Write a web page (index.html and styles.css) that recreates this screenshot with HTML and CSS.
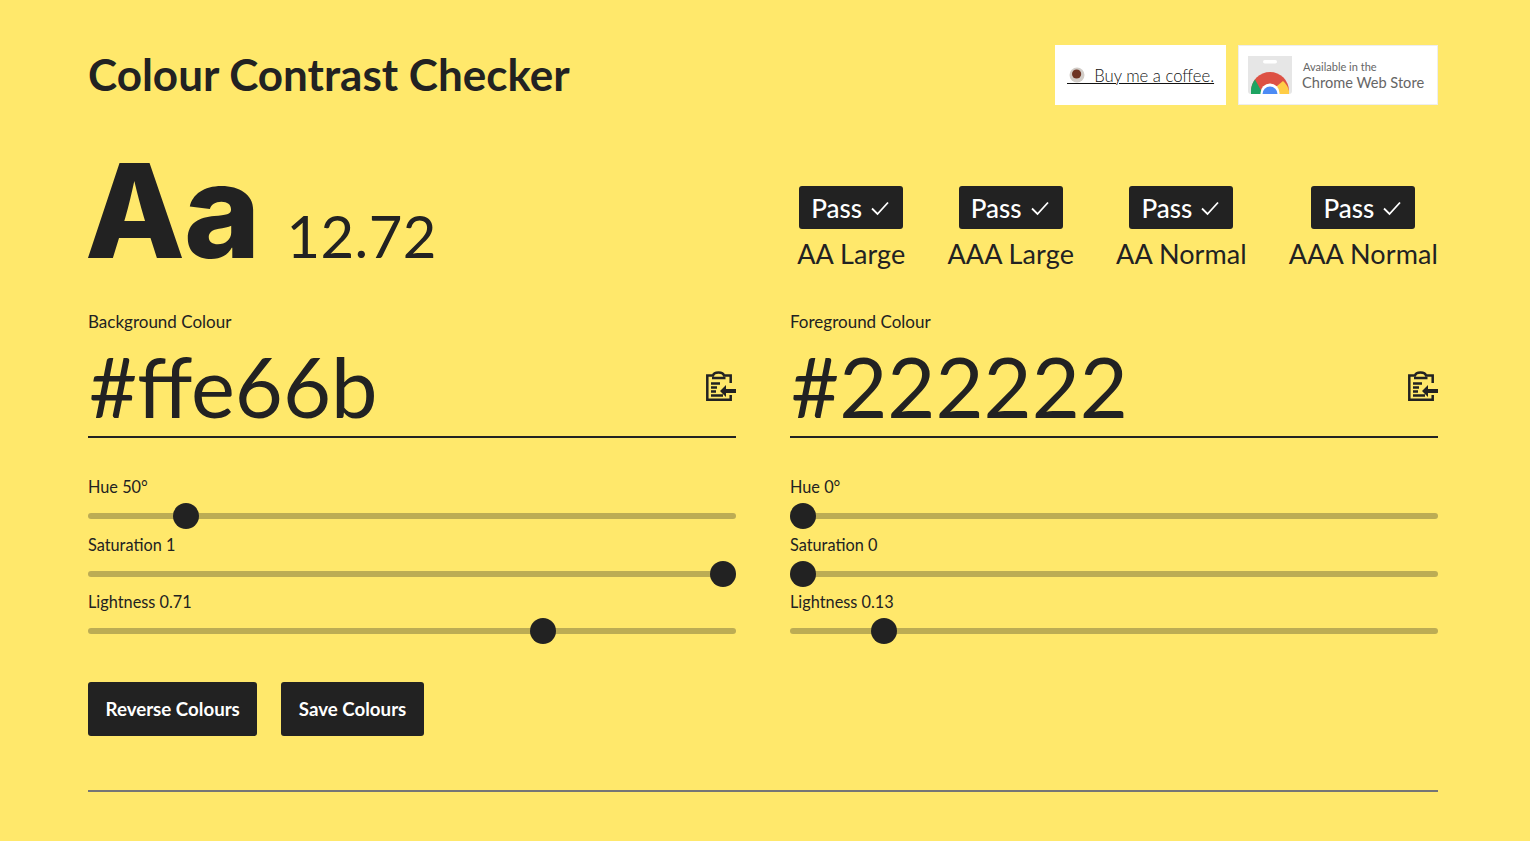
FILE: index.html
```html
<!DOCTYPE html>
<html lang="en">
<head>
<meta charset="utf-8">
<title>Colour Contrast Checker</title>
<link rel="stylesheet" href="styles.css">
</head>
<body>
<main class="page">
  <header class="top">
    <h1 class="title">Colour Contrast Checker</h1>
    <div class="promos">
      <a class="promo coffee" href="#"><svg class="cup" viewBox="0 0 16 16" width="16" height="16"><circle cx="8" cy="8" r="7.500" fill="#d2cdc8"/><circle cx="7.600" cy="7" r="4.600" fill="#6e3524"/></svg><span class="coffee-text">&nbsp;&nbsp;&nbsp;&nbsp;&nbsp;&nbsp;Buy me a coffee.</span></a>
      <a class="promo store" href="#">
        <svg class="store-icon" viewBox="0 0 44 38" width="44" height="38">
          <path d="M0 0H44V35a3 3 0 0 1-3 3H3a3 3 0 0 1-3-3Z" fill="#e6e6e6"/>
          <rect x="15" y="4" width="14" height="3.500" rx="1.700" fill="#fff"/>
          <path d="M3 38V35a19 19 0 0 1 38 0V38Z" fill="#dd5144"/>
          <path d="M3 38V35a19 19 0 0 1 4-11.500L15 38Z" fill="#1da462"/>
          <path d="M29 30L35 25a19 19 0 0 1 6 10V38H29Z" fill="#ffcd46"/>
          <circle cx="22" cy="37" r="9.500" fill="#fff"/>
          <path d="M14.500 38a7.500 7.500 0 0 1 15 0Z" fill="#4c8bf5"/>
        </svg>
        <span class="store-text"><span class="store-small">Available in the</span><span class="store-big">Chrome Web Store</span></span>
      </a>
    </div>
  </header>

  <section class="result">
    <div class="score"><span class="aa">Aa</span><span class="ratio">12.72</span></div>
    <ul class="checks">
      <li class="check"><span class="badge">Pass <svg class="tick" viewBox="0 0 20 20" width="20" height="20"><path d="M2 10.500L7.500 16 18 4.500"/></svg></span><span class="level">AA Large</span></li>
      <li class="check"><span class="badge">Pass <svg class="tick" viewBox="0 0 20 20" width="20" height="20"><path d="M2 10.500L7.500 16 18 4.500"/></svg></span><span class="level">AAA Large</span></li>
      <li class="check"><span class="badge">Pass <svg class="tick" viewBox="0 0 20 20" width="20" height="20"><path d="M2 10.500L7.500 16 18 4.500"/></svg></span><span class="level">AA Normal</span></li>
      <li class="check"><span class="badge">Pass <svg class="tick" viewBox="0 0 20 20" width="20" height="20"><path d="M2 10.500L7.500 16 18 4.500"/></svg></span><span class="level">AAA Normal</span></li>
    </ul>
  </section>

  <section class="columns">
    <div class="column">
      <div class="field-label">Background Colour</div>
      <div class="hex-row">
        <div class="hex">#ffe66b</div>
        <svg class="paste" viewBox="0 0 30 30" width="30" height="30"><path class="paste-line" d="M24.700 12V4.500H18C17 .5 8 .5 7 4.500H1.300V28.700H24.700V24"/><path class="paste-line" d="M6 7H19.500M5 12.500H14M5 16.500H11M5 20.500H10M5 24.500H17"/><path class="paste-fill" d="M14 20l6-6V18H30v4H20v4Z"/></svg>
      </div>
      <div class="control"><label class="label">Hue 50°</label><input class="slider" type="range" min="0" max="360" step="0.1" value="49.300"></div>
      <div class="control"><label class="label">Saturation 1</label><input class="slider" type="range" min="0" max="1" step="0.01" value="1"></div>
      <div class="control"><label class="label">Lightness 0.71</label><input class="slider" type="range" min="0" max="1" step="0.01" value="0.71"></div>
    </div>
    <div class="column">
      <div class="field-label">Foreground Colour</div>
      <div class="hex-row">
        <div class="hex">#222222</div>
        <svg class="paste" viewBox="0 0 30 30" width="30" height="30"><path class="paste-line" d="M24.700 12V4.500H18C17 .5 8 .5 7 4.500H1.300V28.700H24.700V24"/><path class="paste-line" d="M6 7H19.500M5 12.500H14M5 16.500H11M5 20.500H10M5 24.500H17"/><path class="paste-fill" d="M14 20l6-6V18H30v4H20v4Z"/></svg>
      </div>
      <div class="control"><label class="label">Hue 0°</label><input class="slider" type="range" min="0" max="360" step="0.1" value="0"></div>
      <div class="control"><label class="label">Saturation 0</label><input class="slider" type="range" min="0" max="1" step="0.01" value="0"></div>
      <div class="control"><label class="label">Lightness 0.13</label><input class="slider" type="range" min="0" max="1" step="0.01" value="0.13"></div>
    </div>
  </section>

  <div class="actions">
    <button class="btn" type="button">Reverse Colours</button>
    <button class="btn" type="button">Save Colours</button>
  </div>
  <hr class="rule">
</main>
</body>
</html>
```
FILE: styles.css
```css
* { box-sizing: border-box; }
html, body { margin: 0; height: 100%; }
body {
  background: #ffe86b;
  color: #222;
  font-family: "Lato", "Open Sans", sans-serif;
  overflow: hidden;
}
.page { padding: 45px 92px 0 88px; }
.top { display: flex; justify-content: space-between; align-items: center; height: 60px; }
.title { margin: -2px 0 0; font-size: 44px; font-weight: 700; line-height: 60px; }
.promos { display: flex; gap: 12px; }
.promo { background: #fff; height: 60px; display: flex; align-items: center; color: #222; text-decoration: none; }
.coffee { position: relative; width: 171px; padding-left: 12px; font-size: 16.700px; font-weight: 300; }
.coffee-text { text-decoration: underline; text-decoration-thickness: 1px; white-space: pre; margin-top: 1px; color: #111; }
.cup { position: absolute; left: 14px; top: 22px; }
.store { width: 200px; padding-left: 9px; border: 1px solid #eee; gap: 10px; }
.store-text { display: flex; flex-direction: column; color: #666; margin-top: 1px; }
.store-small { font-size: 11px; line-height: 14px; padding-left: 1px; }
.store-big { font-size: 14.600px; line-height: 18px; }
.result { display: flex; justify-content: space-between; align-items: flex-start; margin-top: 36px; height: 171px; }
.score { display: flex; align-items: baseline; }
.aa { font-family: "Inter", sans-serif; font-size: 130px; font-weight: 800; line-height: 139px; margin-left: -3px; letter-spacing: -1px; }
.ratio { font-size: 58px; font-weight: 400; margin-left: 27px; letter-spacing: 0.4px; }
.checks { list-style: none; margin: 0; padding: 45px 0 0; display: flex; gap: 42px; }
.check { display: flex; flex-direction: column; align-items: center; }
.badge { display: flex; align-items: center; gap: 8px; width: 104px; height: 43px; padding-left: 12px; border-radius: 3px; background: #222; color: #fff; font-size: 26px; font-weight: 500; }
.tick { fill: none; stroke: #fff; stroke-width: 1.800; }
.level { font-size: 27px; line-height: 50px; letter-spacing: 0.1px; }
.columns { display: flex; gap: 54px; }
.column { flex: 1; }
.field-label { font-size: 17px; line-height: 20px; }
.label { display: block; font-size: 16.300px; line-height: 20px; }
.hex-row { display: flex; justify-content: space-between; align-items: center; height: 106px; padding-top: 3px; border-bottom: 2px solid #222; }
.hex { font-size: 83px; line-height: 90px; font-weight: 400; margin-left: 1px; }
.paste { margin-top: 1px; }
.paste-line { fill: none; stroke: #222; stroke-width: 2.500; }
.paste-fill { fill: #222; }
.control { height: 57.500px; }
.hex-row + .control { margin-top: 39px; }
.slider { display: block; width: 100%; height: 26px; margin: 6px 0 0; appearance: none; -webkit-appearance: none; background: transparent; }
.slider::-webkit-slider-runnable-track { height: 6px; border-radius: 3px; background: rgba(34, 34, 34, 0.3); }
.slider::-webkit-slider-thumb { -webkit-appearance: none; width: 26px; height: 26px; margin-top: -10px; border-radius: 50%; background: #222; }
.actions { display: flex; gap: 24px; margin-top: 32px; }
.btn { height: 54px; padding: 0 17.500px; border: 0; border-radius: 3px; background: #222; color: #fff; font: 700 18.700px "Lato", sans-serif; }
.rule { margin: 54px 0 0; border: 0; border-top: 2px solid #757575; }
```
